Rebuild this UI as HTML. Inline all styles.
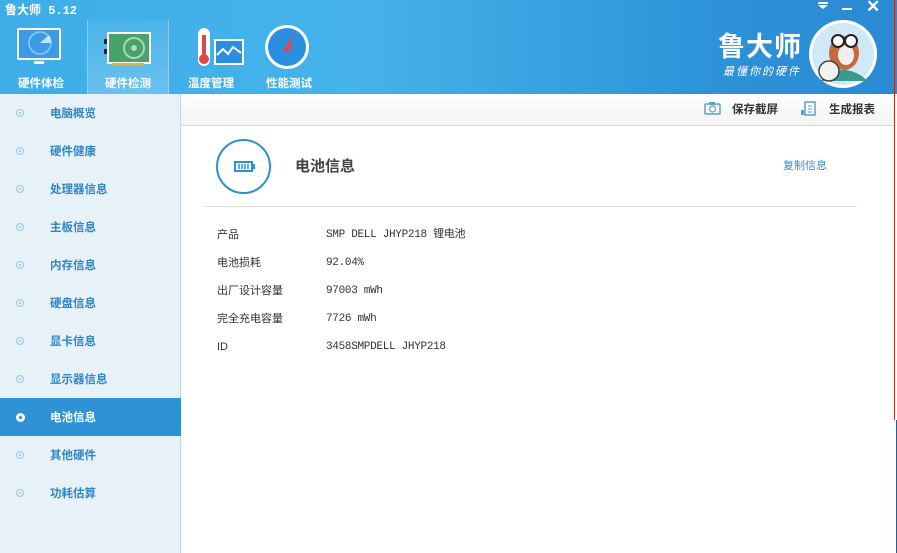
<!DOCTYPE html>
<html><head><meta charset="utf-8"><style>
*{margin:0;padding:0;box-sizing:border-box}
body{width:897px;height:553px;overflow:hidden;position:relative;background:#fff;font-family:"Liberation Sans","Noto Sans CJK SC",sans-serif;font-size:12px}
#top{position:absolute;left:0;top:0;width:897px;height:94px;background:linear-gradient(90deg,#3eaee9 0%,#45b3ea 40%,#2d92d8 80%,#2a8ad4 100%)}
.title{position:absolute;left:5px;top:1px;color:#fff;font-size:12px;font-weight:bold;font-family:"Liberation Mono","Noto Sans CJK SC",monospace}
.tab{position:absolute;top:20px;width:82px;height:74px;color:#fff;font-size:11.5px;font-weight:bold;text-align:center}
.tab span{position:absolute;left:0;right:0;top:55px}
.tab svg{position:absolute;left:16px;top:5px}
.tab.act{background:linear-gradient(180deg,rgba(255,255,255,0.05),rgba(255,255,255,0.22));border-left:1px solid rgba(255,255,255,.3);border-right:1px solid rgba(255,255,255,.3)}
#side{position:absolute;left:0;top:94px;width:181px;height:459px;background:#e6f2f8;border-right:1px solid #b9dcef}
.it{position:absolute;left:0;width:181px;height:38px;color:#2f86c8;font-size:11.5px;font-weight:bold}
.it span{position:absolute;left:50px;top:11px}
.it i{position:absolute;left:16px;top:15px;width:8px;height:8px;border:1px solid #9bc6e4;border-radius:50%}
.it i:after{content:"";position:absolute;left:2px;top:2px;width:2px;height:2px;background:#9bc6e4;border-radius:50%}
.it.sel{background:#2f92d6;color:#fff}
.it.sel i{border:none;background:#fff;width:9px;height:9px}
.it.sel i:after{background:#2f92d6;left:3px;top:3px;width:3px;height:3px}
#bar{position:absolute;left:181px;top:94px;width:713px;height:32px;background:linear-gradient(#fff,#f3f3f3);border-bottom:1px solid #d8d8d8;font-size:11.5px;font-weight:bold;color:#333}
.lbl{position:absolute;left:217px;color:#333;font-size:11px;line-height:14px;font-family:"Liberation Sans","Noto Sans CJK SC",sans-serif}
.val{position:absolute;left:326px;color:#333;font-size:11px;line-height:14px;font-family:"Liberation Mono","Noto Sans CJK SC",monospace;letter-spacing:-0.3px}
</style></head><body>
<div id="top">
<div class="title">鲁大师 5.12</div>
<div class="tab" style="left:0"><svg width="46" height="42"><rect x="1" y="3" width="44" height="32" rx="2" fill="#fff"/><rect x="3" y="5" width="40" height="28" fill="#3d9be6"/><circle cx="24" cy="18" r="11" fill="none" stroke="#8ccdf5" stroke-width="1.5"/><path d="M24 18 L33 10 A11 11 0 0 1 35 18 Z" fill="#bfe4fb"/><rect x="18" y="36" width="10" height="3" fill="#fff"/></svg><span>硬件体检</span></div>
<div class="tab act" style="left:87px"><svg width="50" height="42"><rect x="4" y="8" width="42" height="30" fill="#4aa26b" stroke="#fff" stroke-width="2"/><circle cx="30" cy="23" r="10" fill="none" stroke="#a9dcb5" stroke-width="2"/><circle cx="30" cy="23" r="3" fill="#a9dcb5"/><rect x="8" y="38" width="32" height="3" fill="#e0b040"/><rect x="0" y="14" width="3" height="5" fill="#222"/><rect x="0" y="24" width="3" height="5" fill="#222"/></svg><span>硬件检测</span></div>
<div class="tab" style="left:170px"><svg width="60" height="42"><rect x="12" y="3" width="12" height="38" rx="6" fill="#fff"/><rect x="16" y="10" width="4" height="22" fill="#e04848"/><circle cx="18" cy="34" r="5" fill="#e04848"/><rect x="28" y="14" width="30" height="26" fill="#fff"/><rect x="30" y="16" width="26" height="22" fill="#2a8fe0"/><path d="M31 30 L37 24 L42 29 L47 22 L55 28" stroke="#fff" stroke-width="2" fill="none"/></svg><span>温度管理</span></div>
<div class="tab" style="left:248px"><svg width="50" height="46" style="left:16px;top:4px"><circle cx="23" cy="23" r="22" fill="#fff"/><circle cx="23" cy="23" r="19" fill="#2a8fe0"/><path d="M21 25 L29 10 L26 26 Z" fill="#f04040"/><circle cx="23" cy="25" r="3" fill="#f04040"/></svg><span>性能测试</span></div>
<div style="position:absolute;left:818px;top:2px;width:10px;height:9px"><div style="border-top:2px solid #fff;height:3px"></div><div style="width:0;height:0;border-left:5px solid transparent;border-right:5px solid transparent;border-top:4px solid #fff"></div></div>
<div style="position:absolute;left:842px;top:8px;width:10px;height:2px;background:#fff"></div>
<div style="position:absolute;left:866px;top:-3px;color:#fff;font-size:17px;font-weight:bold">✕</div>
<div style="position:absolute;left:718px;top:25px;color:#fff;font-size:27px;font-weight:bold;letter-spacing:1px">鲁大师</div>
<div style="position:absolute;left:723px;top:63px;color:#fff;font-size:11px;font-style:italic;letter-spacing:2px">最懂你的硬件</div>
<svg style="position:absolute;left:808px;top:19px" width="70" height="70"><circle cx="35" cy="35" r="34" fill="#fff"/><circle cx="35" cy="35" r="31" fill="#cfe9f7"/><path d="M12 62 Q35 40 60 62 Z" fill="#3a9a8c"/><ellipse cx="36" cy="34" rx="15" ry="17" fill="#c46a3c"/><ellipse cx="38" cy="36" rx="8" ry="10" fill="#eee"/><circle cx="30" cy="22" r="6" fill="#fff" stroke="#222" stroke-width="2"/><circle cx="43" cy="22" r="6" fill="#fff" stroke="#222" stroke-width="2"/><circle cx="21" cy="52" r="10" fill="#f2f2f2" stroke="#444" stroke-width="1.5"/></svg>
</div>
<div id="side">
<div class="it" style="top:0"><i></i><span>电脑概览</span></div>
<div class="it" style="top:38px"><i></i><span>硬件健康</span></div>
<div class="it" style="top:76px"><i></i><span>处理器信息</span></div>
<div class="it" style="top:114px"><i></i><span>主板信息</span></div>
<div class="it" style="top:152px"><i></i><span>内存信息</span></div>
<div class="it" style="top:190px"><i></i><span>硬盘信息</span></div>
<div class="it" style="top:228px"><i></i><span>显卡信息</span></div>
<div class="it" style="top:266px"><i></i><span>显示器信息</span></div>
<div class="it sel" style="top:304px"><i></i><span>电池信息</span></div>
<div class="it" style="top:342px"><i></i><span>其他硬件</span></div>
<div class="it" style="top:380px"><i></i><span>功耗估算</span></div>
</div>
<div id="bar">
<svg style="position:absolute;left:523px;top:7px" width="17" height="14"><rect x="1" y="3" width="15" height="10" rx="1" fill="none" stroke="#5a9fd0" stroke-width="1.5"/><rect x="5" y="1" width="6" height="3" fill="#5a9fd0"/><circle cx="8.5" cy="8" r="3" fill="none" stroke="#5a9fd0" stroke-width="1.2"/></svg>
<span style="position:absolute;left:551px;top:7px">保存截屏</span>
<svg style="position:absolute;left:620px;top:7px" width="15" height="15"><rect x="4" y="1" width="10" height="13" fill="none" stroke="#5a9fd0" stroke-width="1.5"/><rect x="0" y="9" width="3" height="5" fill="#5a9fd0"/><path d="M7 5h4M7 8h4M7 11h4" stroke="#5a9fd0"/></svg>
<span style="position:absolute;left:648px;top:7px">生成报表</span>
</div>
<div style="position:absolute;left:216px;top:139px;width:55px;height:55px;border:2px solid #2f8fd3;border-radius:50%"></div>
<svg style="position:absolute;left:234px;top:161px" width="22" height="11"><rect x="1" y="1" width="17" height="9" fill="none" stroke="#2f8fd3" stroke-width="2"/><rect x="19" y="3" width="2" height="5" fill="#2f8fd3"/><path d="M5 3v5M8 3v5M11 3v5M14 3v5" stroke="#2f8fd3" stroke-width="1.5"/></svg>
<div style="position:absolute;left:295px;top:155px;font-size:15px;font-weight:bold;color:#444">电池信息</div>
<div style="position:absolute;left:783px;top:157px;font-size:11px;color:#2f8fd3">复制信息</div>
<div style="position:absolute;left:204px;top:206px;width:653px;height:1px;background:#e2e2e2"></div>
<div class="lbl" style="top:228px">产品</div><div class="val" style="top:228px">SMP DELL JHYP218 锂电池</div>
<div class="lbl" style="top:256px">电池损耗</div><div class="val" style="top:256px">92.04%</div>
<div class="lbl" style="top:284px">出厂设计容量</div><div class="val" style="top:284px">97003 mWh</div>
<div class="lbl" style="top:312px">完全充电容量</div><div class="val" style="top:312px">7726 mWh</div>
<div class="lbl" style="top:340px">ID</div><div class="val" style="top:340px">3458SMPDELL JHYP218</div>
<div style="position:absolute;left:894px;top:0;width:1px;height:420px;background:#b03020"></div>
<div style="position:absolute;left:896px;top:420px;width:1px;height:133px;background:#1f5fa0"></div>
</body></html>
